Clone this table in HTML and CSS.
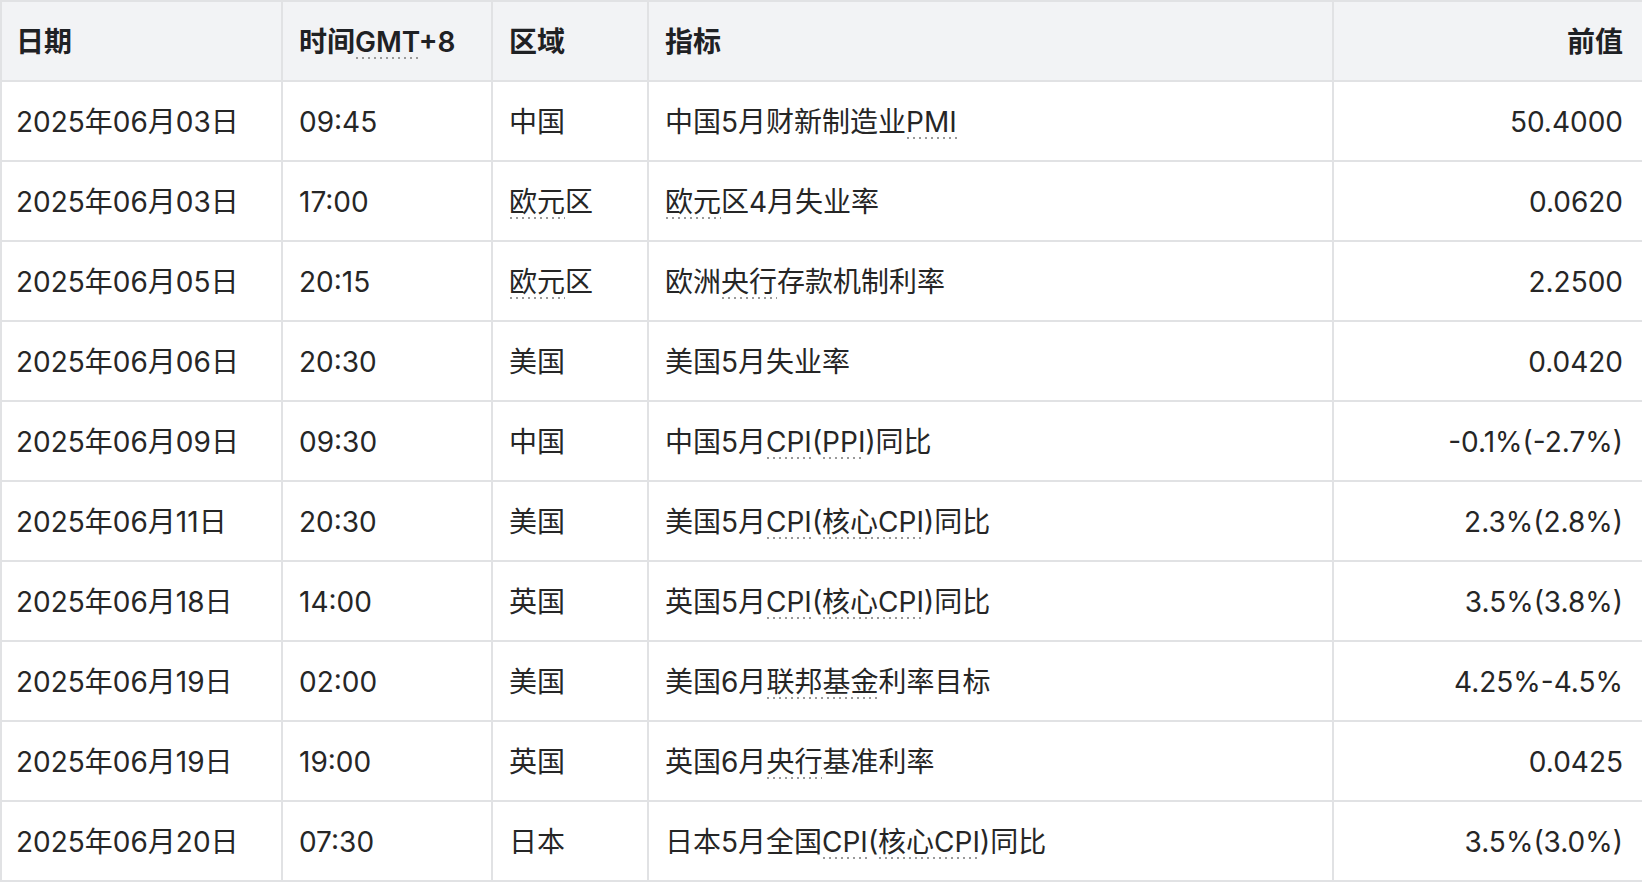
FILE: index.html
```html
<!DOCTYPE html>
<html lang="zh-CN">
<head>
<meta charset="utf-8">
<title>财经日历</title>
<link rel="stylesheet" href="styles.css">
</head>
<body>
<table class="cal">
  <colgroup>
    <col class="c-date">
    <col class="c-time">
    <col class="c-area">
    <col class="c-ind">
    <col class="c-prev">
  </colgroup>
  <thead>
    <tr>
      <th>日期</th>
      <th>时间<span class="term">GMT</span>+8</th>
      <th>区域</th>
      <th>指标</th>
      <th class="num">前值</th>
    </tr>
  </thead>
  <tbody>
    <tr><td>2025年06月03日</td><td>09:45</td><td>中国</td><td>中国5月财新制造业<span class="term">PMI</span></td><td class="num">50.4000</td></tr>
    <tr><td>2025年06月03日</td><td>17:00</td><td><span class="term">欧元</span>区</td><td><span class="term">欧元</span>区4月失业率</td><td class="num">0.0620</td></tr>
    <tr><td>2025年06月05日</td><td>20:15</td><td><span class="term">欧元</span>区</td><td>欧洲<span class="term">央行</span>存款机制利率</td><td class="num">2.2500</td></tr>
    <tr><td>2025年06月06日</td><td>20:30</td><td>美国</td><td>美国5月失业率</td><td class="num">0.0420</td></tr>
    <tr><td>2025年06月09日</td><td>09:30</td><td>中国</td><td>中国5月<span class="term">CPI</span>(<span class="term">PPI</span>)同比</td><td class="num">-0.1%(-2.7%)</td></tr>
    <tr><td>2025年06月11日</td><td>20:30</td><td>美国</td><td>美国5月<span class="term">CPI</span>(<span class="term">核心CPI</span>)同比</td><td class="num">2.3%(2.8%)</td></tr>
    <tr><td>2025年06月18日</td><td>14:00</td><td>英国</td><td>英国5月<span class="term">CPI</span>(<span class="term">核心CPI</span>)同比</td><td class="num">3.5%(3.8%)</td></tr>
    <tr><td>2025年06月19日</td><td>02:00</td><td>美国</td><td>美国6月<span class="term">联邦基金</span>利率目标</td><td class="num">4.25%-4.5%</td></tr>
    <tr><td>2025年06月19日</td><td>19:00</td><td>英国</td><td>英国6月<span class="term">央行</span>基准利率</td><td class="num">0.0425</td></tr>
    <tr><td>2025年06月20日</td><td>07:30</td><td>日本</td><td>日本5月全国<span class="term">CPI</span>(<span class="term">核心CPI</span>)同比</td><td class="num">3.5%(3.0%)</td></tr>
  </tbody>
</table>
</body>
</html>
```

FILE: styles.css
```css
html, body {
  margin: 0;
  padding: 0;
  background: #ffffff;
}

body {
  font-family: "Inter", "Noto Sans CJK SC", sans-serif;
  font-size: 28px;
  color: #262626;
}

.cal {
  width: 1642px;
  border-collapse: collapse;
  table-layout: fixed;
}

.c-date { width: 281px; }
.c-time { width: 210px; }
.c-area { width: 156px; }
.c-ind  { width: 685px; }
.c-prev { width: 310px; }

.cal th,
.cal td {
  border: 2px solid #e1e2e4;
  height: 75px;
  padding: 3px 19px 0 16px;
  text-align: left;
  vertical-align: middle;
  white-space: nowrap;
  line-height: 1.2;
}

.cal th:first-child,
.cal td:first-child {
  padding-left: 14px;
}

.cal th {
  background: #f2f3f5;
  font-weight: 600;
  color: #1f2124;
}

.cal .num {
  text-align: right;
}

.term {
  background-image: linear-gradient(to right, #9a9a9a 2px, transparent 2px);
  background-size: 6px 2px;
  background-repeat: repeat-x;
  background-position: 1px 100%;
}
```
